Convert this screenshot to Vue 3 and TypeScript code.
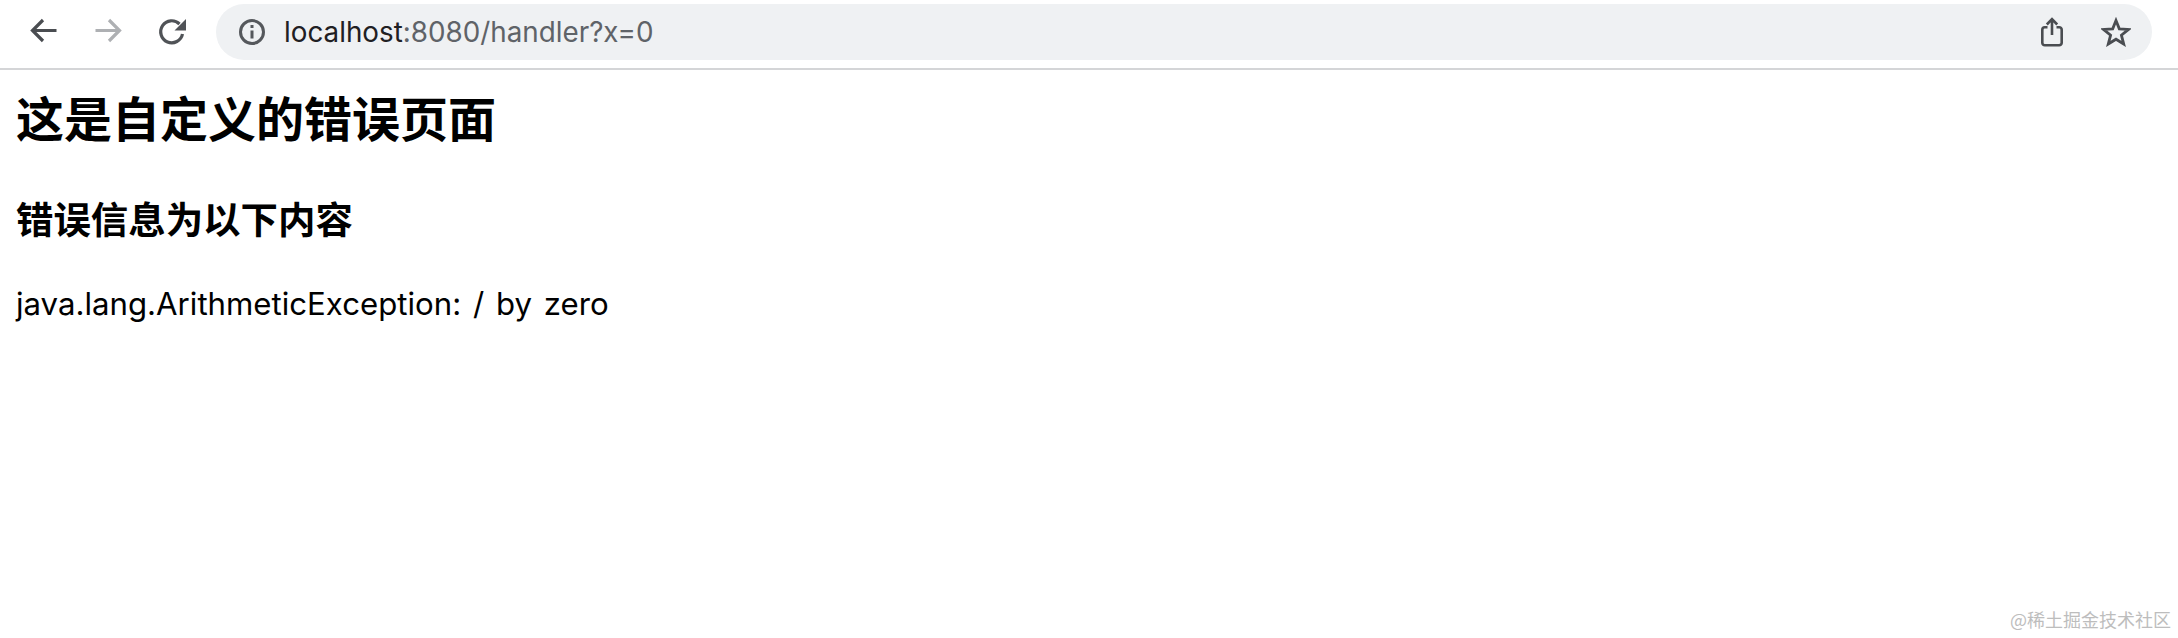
<script setup lang="ts">
const host = 'localhost'
const rest = ':8080/handler?x=0'
</script>

<template>
  <div class="page">
    <header class="toolbar">
      <div class="nav">
        <svg class="btn" viewBox="0 0 32 32" fill="none" stroke="#4a4d51" stroke-width="3.200">
          <path d="M28.500 14.500H5M15 4 4.500 14.500 15 25" />
        </svg>
        <svg class="btn" viewBox="0 0 32 32" fill="none" stroke="#aeb0b3" stroke-width="3.200">
          <path d="M3.500 14.500H27M17 4 27.500 14.500 17 25" />
        </svg>
        <svg class="btn" viewBox="0 0 32 32" fill="none" stroke="#505357" stroke-width="3.200">
          <path d="M26.500 18A11 11 0 1 1 23.500 8" />
          <path d="M30 3v11.500H18.500z" fill="#505357" stroke="none" />
        </svg>
      </div>
      <div class="omnibox">
        <svg class="info" viewBox="0 0 28 28" fill="none" stroke="#55585c" stroke-width="3">
          <circle cx="14" cy="14" r="11.500" />
          <path d="M14 12.500v8M14 7v3" />
        </svg>
        <div class="url"><span class="host">{{ host }}</span><span class="rest">{{ rest }}</span></div>
        <svg class="share" viewBox="0 0 26 34" fill="none" stroke="#4a4d51" stroke-width="2.600">
          <path d="M8.500 12.300H5.800a2.500 2.500 0 0 0-2.500 2.500V27.700a2.500 2.500 0 0 0 2.500 2.500h14.400a2.500 2.500 0 0 0 2.500-2.500V14.800a2.500 2.500 0 0 0-2.500-2.500h-2.700" />
          <path d="M13 20V5M7.800 9.500 13 4.200 18.200 9.500" />
        </svg>
        <svg class="star" viewBox="0 0 30 30" fill="none" stroke="#4a4d51" stroke-width="2.800">
          <path d="M15 3.500 18.300 11.800 27.500 12.400 20.400 18.200 22.700 27 15 22.200 7.300 27 9.600 18.200 2.500 12.400 11.700 11.800z" />
        </svg>
      </div>
    </header>
    <main class="content">
      <h1>这是自定义的错误页面</h1>
      <h3>错误信息为以下内容</h3>
      <p>java.lang.ArithmeticException: / by zero</p>
    </main>
    <span class="watermark">@稀土掘金技术社区</span>
  </div>
</template>

<style>
html, body { margin: 0; background: #fff; }
</style>

<style scoped>
.page {
  position: relative;
  height: 638px;
  overflow: hidden;
  font-family: "Inter", "Noto Sans CJK SC", sans-serif;
  color: #000;
}
.toolbar {
  display: flex;
  align-items: center;
  height: 70px;
  padding: 0 26px 4px 28px;
  box-sizing: border-box;
  border-bottom: 2px solid #d4d5d7;
}
.nav {
  display: flex;
  align-items: center;
  gap: 32px;
  margin-right: 28px;
}
.btn { width: 32px; height: 32px; display: block; }
.omnibox {
  flex: 1;
  display: flex;
  align-items: center;
  height: 56px;
  padding: 0 21px 0 22px;
  border-radius: 28px;
  background: #eff1f3;
}
.info { width: 28px; height: 28px; margin-right: 18px; }
.url {
  flex: 1;
  font-size: 27.800px;
}
.host { color: #1f2023; }
.rest { color: #5f6368; }
.share { width: 26px; height: 34px; margin-right: 36px; }
.star { width: 30px; height: 30px; }
.content { padding: 0 16px; }
h1 {
  margin: 19px 0 0;
  font-size: 48px;
  line-height: 62px;
  font-weight: 700;
}
h3 {
  margin: 48px 0 0;
  font-size: 37.440px;
  line-height: 44px;
  font-weight: 700;
}
p {
  margin: 41px 0 0;
  font-size: 31.200px;
  word-spacing: 3px;
  line-height: 40px;
}
.watermark {
  position: absolute;
  right: 7px;
  bottom: 7px;
  font-size: 18px;
  font-family: "Noto Sans CJK SC", sans-serif;
  color: #bdbdbd;
  line-height: 24px;
}
</style>
